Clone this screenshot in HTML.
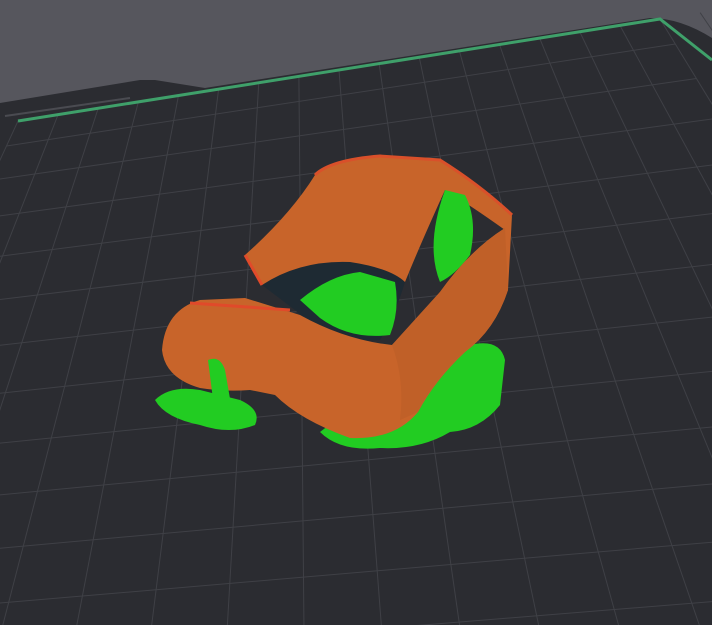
<!DOCTYPE html>
<html><head><meta charset="utf-8"><style>
html,body{margin:0;padding:0;width:712px;height:625px;overflow:hidden;background:#56565d}
svg{display:block;position:absolute;left:0;top:0}
</style></head><body>
<svg width="712" height="625" viewBox="0 0 712 625" xmlns="http://www.w3.org/2000/svg">
<path d="M0 103 L140 80 L155 80 L205 88 L650 18 Q680 18 712 38 L712 625 L0 625 Z" fill="#2b2c31"/>
<g id="grid" stroke="#3f4046" stroke-width="1" fill="none"></g>
<polyline points="18,121 660,19 712,60" fill="none" stroke="#3fa06a" stroke-width="3"/>
<line x1="5" y1="116" x2="130" y2="98" stroke="#4a4b51" stroke-width="2"/>
<!-- green supports base -->
<path d="M155 400 Q170 385 200 390 L240 400 Q262 410 255 425 Q230 435 200 425 Q165 418 155 400Z" fill="#22cc22"/>
<path d="M320 432 Q340 415 380 410 L430 380 L470 345 Q500 338 505 360 L500 405 Q480 430 450 432 Q420 450 380 448 Q340 452 320 432Z" fill="#22cc22"/>
<!-- back wall -->
<path d="M245 255 Q290 215 315 175 Q330 160 380 156 L440 160 Q480 185 512 215 L505 230 Q470 205 445 190 Q420 245 405 282 L300 300 L262 285Z" fill="#c8642a"/>
<!-- inner -->
<path d="M262 285 Q300 260 350 262 Q390 268 405 282 Q395 315 380 340 Q330 345 295 310Z" fill="#1e2a33"/>
<path d="M300 300 Q330 275 360 272 L395 282 Q400 310 390 335 Q350 340 320 318Z" fill="#22cc22"/>
<path d="M445 190 L465 195 Q478 220 470 255 Q455 275 440 282 Q425 245 445 190Z" fill="#22cc22"/>
<!-- left lobe + front wall -->
<path d="M200 300 L245 298 L300 315 Q345 340 392 345 L440 292 Q470 250 505 228 L512 215 L508 290 Q495 330 465 352 Q435 380 418 412 Q395 440 350 438 Q300 420 275 395 L250 390 Q225 392 200 388 Q165 378 162 350 Q165 310 200 300Z" fill="#c8642a"/>
<path d="M392 345 L440 292 Q470 250 505 228 L508 290 Q495 330 465 352 Q435 380 418 412 L400 420 Q405 380 392 345Z" fill="#c06028"/>
<path d="M208 360 Q220 355 225 370 L232 410 L215 415 Z" fill="#22cc22"/>
<line x1="190" y1="303" x2="290" y2="310" stroke="#e04a2a" stroke-width="3"/>
<line x1="245" y1="255" x2="262" y2="285" stroke="#e04a2a" stroke-width="3"/>
<path d="M315 175 Q330 160 380 156 L440 160 Q480 185 512 215" fill="none" stroke="#d9502a" stroke-width="3"/>
</svg>
<script>
(function(){
var g=document.getElementById('grid');
var A=[18,121],B=[660,19],C=[1150,820],D=[-350,920];
function lerp(p,q,t){return [p[0]+(q[0]-p[0])*t,p[1]+(q[1]-p[1])*t];}
function f(t){return Math.pow(t,1.25);}
var h='';var N=16;
for(var i=0;i<=N;i++){var t=f(i/N);var p=lerp(A,D,t),q=lerp(B,C,t);h+='<line x1="'+p[0]+'" y1="'+p[1]+'" x2="'+q[0]+'" y2="'+q[1]+'"/>';}
for(var j=-4;j<=20;j++){var t=j/16;var p=lerp(A,B,t),q=lerp(D,C,t);h+='<line x1="'+p[0]+'" y1="'+p[1]+'" x2="'+q[0]+'" y2="'+q[1]+'"/>';}
g.innerHTML=h;
})();
</script>
</body></html>
